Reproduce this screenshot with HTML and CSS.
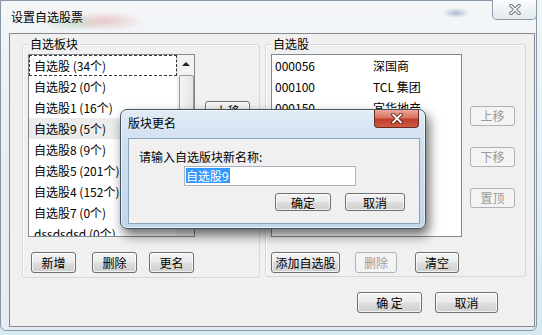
FILE: index.html
```html
<!DOCTYPE html>
<html>
<head>
<meta charset="utf-8">
<link rel="stylesheet" href="styles.css">
<title>设置自选股票</title>
</head>
<body>
<div class="desk">

    <div class="window">
        <div class="titlebar">
            <span class="title">设置自选股票</span>
            <span class="win-close">
                <svg width="12" height="11" viewBox="0 0 12 11">
                    <path d="M2 1.5 L10 9.5 M10 1.5 L2 9.5" stroke="#6b6f75" stroke-width="3.4" stroke-linecap="round"/>
                    <path d="M2 1.5 L10 9.5 M10 1.5 L2 9.5" stroke="#fff" stroke-width="1.6" stroke-linecap="round"/>
                </svg>
            </span>
        </div>

        <div class="client">
            <div class="groups">
                <div class="group group-left">
                    <div class="group-title">自选板块</div>
                    <div class="group-body">
                        <div class="listbox list-left">
                            <div class="items">
                                <div class="item focus">自选股 (34个)</div>
                                <div class="item">自选股2 (0个)</div>
                                <div class="item">自选股1 (16个)</div>
                                <div class="item sel">自选股9 (5个)</div>
                                <div class="item">自选股8 (9个)</div>
                                <div class="item">自选股5 (201个)</div>
                                <div class="item">自选股4 (152个)</div>
                                <div class="item">自选股7 (0个)</div>
                                <div class="item">dssdsdsd (0个)</div>
                            </div>
                            <div class="vscroll">
                                <div class="sb-arrow"><span class="tri"></span></div>
                                <div class="sb-thumb"></div>
                            </div>
                        </div>
                        <div class="side-btns side-left">
                            <button class="btn">上移</button>
                            <button class="btn">下移</button>
                        </div>
                    </div>
                    <div class="btn-row row-left">
                        <button class="btn w45">新增</button>
                        <button class="btn w45 gap16">删除</button>
                        <button class="btn w45 gap12">更名</button>
                    </div>
                </div>

                <div class="group group-right">
                    <div class="group-title">自选股</div>
                    <div class="group-body">
                        <div class="listbox list-right">
                            <div class="row"><span class="code">000056</span><span>深国商</span></div>
                            <div class="row"><span class="code">000100</span><span>TCL 集团</span></div>
                            <div class="row"><span class="code">000150</span><span>宜华地产</span></div>
                            <div class="row"><span class="code">000157</span><span>中联重科</span></div>
                            <div class="row"><span class="code">000333</span><span>美的集团</span></div>
                        </div>
                        <div class="side-btns side-right">
                            <button class="btn off">上移</button>
                            <button class="btn off">下移</button>
                            <button class="btn off">置顶</button>
                        </div>
                    </div>
                    <div class="btn-row row-right">
                        <button class="btn w69">添加自选股</button>
                        <button class="btn off w42 gap15">删除</button>
                        <button class="btn w44 gap18">清空</button>
                    </div>
                </div>
            </div>

            <div class="footer">
                <button class="btn w65">确 定</button>
                <button class="btn w63">取消</button>
            </div>
        </div>
    </div>

    <!-- rename dialog sits over the main window -->
    <div class="dialog">
        <div class="dlg-titlebar">
            <span class="dlg-title">版块更名</span>
            <span class="dlg-close">
                <svg width="12" height="11" viewBox="0 0 12 11">
                    <path d="M2 1.5 L10 9.5 M10 1.5 L2 9.5" stroke="#5a1a10" stroke-width="3.6" stroke-linecap="round"/>
                    <path d="M2 1.5 L10 9.5 M10 1.5 L2 9.5" stroke="#fff" stroke-width="1.8" stroke-linecap="round"/>
                </svg>
            </span>
        </div>
        <div class="dlg-client">
            <div class="dlg-label">请输入自选版块新名称:</div>
            <div class="dlg-input"><span class="picked">自选股9</span></div>
            <div class="dlg-btns">
                <button class="btn w56">确定</button>
                <button class="btn w60">取消</button>
            </div>
        </div>
    </div>

</div>
</body>
</html>
```

FILE: styles.css
```css
* {
    box-sizing: border-box;
}

body {
    margin: 0;
    width: 542px;
    height: 335px;
    overflow: hidden;
    font-family: "Noto Sans CJK SC", "Noto Sans", sans-serif;
    font-size: 12px;
    color: #000;
    background: linear-gradient(180deg, #eef5f8 0%, #d5eaf2 100%);
}

.desk {
    position: relative;
    width: 542px;
    height: 335px;
}

/* main window */
.window {
    width: 537px;
    height: 331px;
    border: 1px solid #8796a6;
    border-radius: 0 6px 6px 6px;
    background:
        radial-gradient(ellipse 40px 10px at 104px 20px, rgba(214, 120, 120, 0.35), transparent),
        radial-gradient(ellipse 30px 9px at 72px 22px, rgba(130, 190, 140, 0.35), transparent),
        radial-gradient(ellipse 14px 5px at 455px 12px, rgba(90, 120, 170, 0.45), transparent),
        linear-gradient(180deg, #f4f6f8 0%, #e9eef2 40%, #e6edf2 100%);
    display: flex;
    flex-direction: column;
}

.titlebar {
    height: 32px;
    display: flex;
    justify-content: space-between;
    align-items: flex-start;
}

.title {
    padding: 8px 0 0 10px;
    line-height: 16px;
}

.win-close {
    width: 45px;
    height: 20px;
    margin: -1px -1px 0 0;
    border: 1px solid #8c99a6;
    border-top: none;
    border-radius: 0 0 5px 5px;
    background: linear-gradient(180deg, #fbfcfd 0%, #eef2f5 50%, #e3e9ee 100%);
    display: flex;
    align-items: center;
    justify-content: center;
}

.client {
    height: 294px;
    margin: 0 1px 0 8px;
    border: 1px solid #858a91;
    background: #f0f0f0;
    padding: 10px 0 0 12px;
}

.groups {
    display: flex;
    gap: 5px;
}

.group {
    border: 1px solid #d5d9dc;
    border-radius: 3px;
    box-shadow: inset 1px 1px 0 #fff;
}

.group-left {
    width: 238px;
    height: 234px;
}

.group-right {
    width: 261px;
    height: 233px;
}

.group-title {
    width: max-content;
    margin: -8px 0 0 5px;
    padding: 0 2px;
    background: #f0f0f0;
    line-height: 14px;
}

.group-body {
    display: flex;
    margin-top: 3px;
    padding-left: 5px;
}

.listbox {
    height: 183px;
    border: 1px solid #828790;
    background: #fff;
    overflow: hidden;
}

.list-left {
    width: 167px;
    display: flex;
}

.items {
    flex: 1;
}

.item {
    height: 21px;
    line-height: 21px;
    padding-left: 5px;
    white-space: nowrap;
}

.item.focus {
    outline: 1px dashed #333;
    outline-offset: -1px;
}

.item.sel {
    background: #ececec;
}

.vscroll {
    width: 17px;
    background: #f3f3f3;
    border-left: 1px solid #eaeaea;
    display: flex;
    flex-direction: column;
    align-items: center;
}

.sb-arrow {
    height: 18px;
    width: 16px;
    display: flex;
    align-items: center;
    justify-content: center;
}

.tri {
    width: 0;
    height: 0;
    border-left: 4px solid transparent;
    border-right: 4px solid transparent;
    border-bottom: 4px solid #222;
}

.sb-thumb {
    width: 15px;
    height: 150px;
    margin-top: 2px;
    border: 1px solid #9a9a9a;
    border-radius: 2px;
    background: linear-gradient(90deg, #f6f6f6, #e4e4e4);
}

.list-right {
    width: 191px;
}

.row {
    display: flex;
    height: 21px;
    line-height: 21px;
    padding-left: 3px;
    white-space: nowrap;
}

.code {
    width: 98px;
}

.side-btns {
    display: flex;
    flex-direction: column;
}

.side-btns .btn {
    width: 45px;
    height: 20px;
}

.side-left {
    margin-left: 10px;
    padding-top: 47px;
    gap: 20px;
}

.side-right {
    margin-left: 8px;
    padding-top: 52px;
    gap: 21px;
}

.btn-row {
    display: flex;
    margin-top: 15px;
}

.row-left {
    padding-left: 8px;
}

.row-right {
    padding-left: 5px;
}

/* win7 push button */
.btn {
    height: 21px;
    padding: 0;
    border: 1px solid #707070;
    border-radius: 3px;
    background: linear-gradient(180deg, #f4f4f4 0%, #ebebeb 48%, #dddddd 52%, #cfcfcf 100%);
    box-shadow: inset 0 0 0 1px rgba(255, 255, 255, 0.7);
    font-family: inherit;
    font-size: 12px;
    line-height: 18px;
    color: #000;
    text-align: center;
}

.btn.off {
    border-color: #adb2b5;
    background: #f4f4f4;
    box-shadow: none;
    color: #9a9a9a;
}

.w42 { width: 42px; }
.w44 { width: 44px; }
.w45 { width: 45px; }
.w56 { width: 56px; }
.w60 { width: 60px; }
.w63 { width: 63px; }
.w65 { width: 65px; }
.w69 { width: 69px; }

.gap12 { margin-left: 12px; }
.gap15 { margin-left: 15px; }
.gap16 { margin-left: 16px; }
.gap18 { margin-left: 18px; }

.footer {
    display: flex;
    justify-content: flex-end;
    gap: 13px;
    margin-top: 14px;
    padding-right: 36px;
}

/* rename dialog */
.dialog {
    position: absolute;
    left: 120px;
    top: 109px;
    width: 306px;
    height: 120px;
    border: 1px solid #44515f;
    border-radius: 7px;
    background: linear-gradient(180deg, #e1ebf5 0%, #cfdff0 30%, #c2d6ec 100%);
    box-shadow: 3px 6px 12px rgba(0, 0, 0, 0.6), inset 0 0 0 1px rgba(255, 255, 255, 0.6);
    display: flex;
    flex-direction: column;
}

.dlg-titlebar {
    height: 28px;
    display: flex;
    justify-content: space-between;
    align-items: flex-start;
}

.dlg-title {
    padding: 5px 0 0 7px;
    line-height: 16px;
}

.dlg-close {
    width: 45px;
    height: 18px;
    margin-right: 6px;
    border: 1px solid #6b2a20;
    border-top: none;
    border-radius: 0 0 4px 4px;
    background: linear-gradient(180deg, #eaa898 0%, #d87461 45%, #c13e2b 55%, #cf5a45 100%);
    display: flex;
    align-items: center;
    justify-content: center;
}

.dlg-client {
    height: 86px;
    margin: 0 5px 0 7px;
    border: 1px solid #8fa4b9;
    background: #f0f0f0;
    padding: 10px 14px 0 10px;
}

.dlg-label {
    line-height: 16px;
}

.dlg-input {
    width: 172px;
    height: 20px;
    margin: 1px 0 0 45px;
    border: 1px solid #a9b3bd;
    background: #fff;
    padding: 1px 0 0 1px;
    line-height: 15px;
}

.picked {
    display: inline-block;
    background: #3399ff;
    color: #fff;
    padding-right: 1px;
}

.dlg-btns {
    display: flex;
    justify-content: flex-end;
    gap: 14px;
    margin-top: 7px;
}

.dlg-btns .btn {
    height: 18px;
    line-height: 15px;
}
```
